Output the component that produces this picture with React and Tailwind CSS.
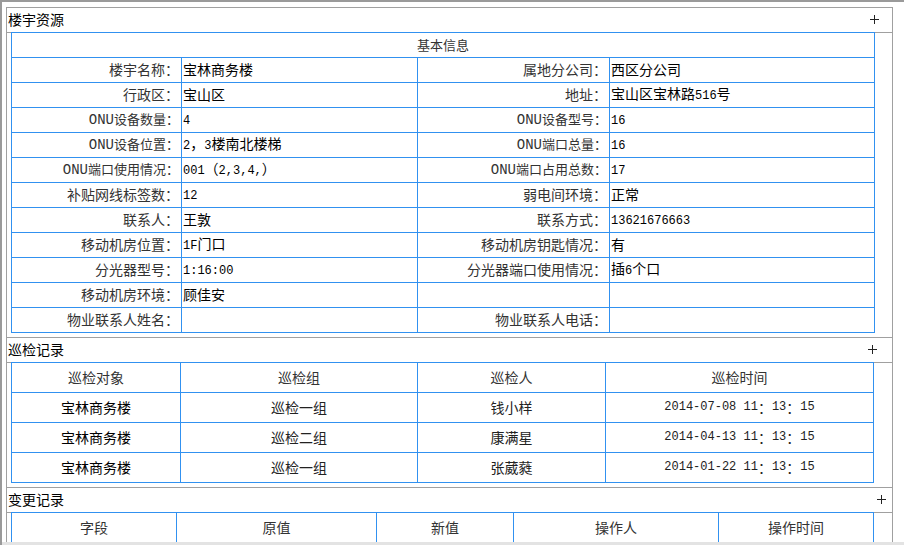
import React from "react";

const CJK = "font-['Noto_Sans_CJK_SC',sans-serif]";

function Mixed({ text, asciiCls = "text-[12px]" }) {
  const parts = text.match(/[\x20-\x7e]+|[^\x20-\x7e]+/g) || [];
  return parts.map((p, i) =>
    /[\x20-\x7e]/.test(p[0]) ? (
      <span key={i} className={"font-['Liberation_Mono',monospace] " + asciiCls}>
        {p}
      </span>
    ) : (
      <span key={i}>{p}</span>
    )
  );
}

function Plus() {
  return (
    <svg width="9" height="9" viewBox="0 0 9 9" className="block">
      <line x1="0" y1="4.5" x2="9" y2="4.5" stroke="#222" strokeWidth="1" />
      <line x1="4.5" y1="0" x2="4.5" y2="9" stroke="#222" strokeWidth="1" />
    </svg>
  );
}

function Header({ title, prCls }) {
  return (
    <div className={"h-[25px] border-b border-[#a0a0a0] flex items-center justify-between pb-[2px] " + prCls}>
      <span className={"text-[14px] leading-none text-black pl-px " + CJK}>{title}</span>
      <Plus />
    </div>
  );
}

const info = [
  ["楼宇名称：", "宝林商务楼", "属地分公司：", "西区分公司"],
  ["行政区：", "宝山区", "地址：", "宝山区宝林路516号"],
  ["ONU设备数量：", "4", "ONU设备型号：", "16"],
  ["ONU设备位置：", "2，3楼南北楼梯", "ONU端口总量：", "16"],
  ["ONU端口使用情况：", "001（2,3,4,）", "ONU端口占用总数：", "17"],
  ["补贴网线标签数：", "12", "弱电间环境：", "正常"],
  ["联系人：", "王敦", "联系方式：", "13621676663"],
  ["移动机房位置：", "1F门口", "移动机房钥匙情况：", "有"],
  ["分光器型号：", "1:16:00", "分光器端口使用情况：", "插6个口"],
  ["移动机房环境：", "顾佳安", "", ""],
  ["物业联系人姓名：", "", "物业联系人电话：", ""],
];

function Label({ text, w }) {
  const small = text.startsWith("ONU");
  return (
    <div
      className={
        "h-full border-r border-[#3191f0] flex items-center justify-end pr-[2px] pb-[2px] leading-none text-[#333] " +
        (small ? "text-[13px] " : "text-[14px] ") +
        w
      }
    >
      <span className="whitespace-nowrap">
        <Mixed text={text} asciiCls={small ? "text-[14px]" : "text-[12px]"} />
      </span>
    </div>
  );
}

function Value({ text, w }) {
  return (
    <div
      className={
        "h-full border-r border-[#3191f0] flex items-center pl-[1px] pb-[2px] leading-none text-[14px] text-black " + w
      }
    >
      <span className="whitespace-nowrap">
        <Mixed text={text} />
      </span>
    </div>
  );
}

const inspect = [
  ["宝林商务楼", "巡检一组", "钱小样", "2014-07-08 11：13：15"],
  ["宝林商务楼", "巡检二组", "康满星", "2014-04-13 11：13：15"],
  ["宝林商务楼", "巡检一组", "张葳蕤", "2014-01-22 11：13：15"],
];
const inspW = ["w-[169px]", "w-[237px]", "w-[188px]", "w-[268px]"];
const changeW = ["w-[165px]", "w-[200px]", "w-[137px]", "w-[205px]", "w-[155px]"];

function Cell({ children, w, cls = "" }) {
  return (
    <div
      className={
        "h-full border-r border-[#3191f0] flex items-center justify-center pb-[2px] leading-none text-[14px] whitespace-nowrap " +
        w +
        " " +
        cls
      }
    >
      {children}
    </div>
  );
}

export default function App() {
  return (
    <div className={"w-[904px] h-[545px] bg-white border-t-2 border-l-2 border-[#9a9a9a] flex flex-col overflow-hidden " + CJK}>
      <div className="flex-1 min-h-0 overflow-hidden pl-1 pt-[5px]">
        <div className="w-[887px] border-l border-r border-t border-[#a0a0a0]">
          {/* Section 1 */}
          <div className="border-b border-[#a0a0a0] pb-1">
            <Header title="楼宇资源" prCls="pr-[13px]" />
            <div className="ml-1 -mt-px w-[864px] border-t border-l border-[#3191f0]">
              <div className="h-[25px] border-b border-r border-[#3191f0] flex items-center justify-center pb-[2px] text-[13px] leading-none text-[#333]">
                基本信息
              </div>
              {info.map((r, i) => (
                <div key={i} className="flex h-[25px] border-b border-[#3191f0]">
                  <Label text={r[0]} w="w-[170px]" />
                  <Value text={r[1]} w="w-[236px]" />
                  <Label text={r[2]} w="w-[192px]" />
                  <Value text={r[3]} w="w-[265px]" />
                </div>
              ))}
            </div>
          </div>

          {/* Section 2 */}
          <div className="border-b border-[#a0a0a0] pb-1">
            <Header title="巡检记录" prCls="pr-[15px]" />
            <div className="ml-1 -mt-px w-[863px] border-t border-l border-[#3191f0]">
              <div className="flex h-[30px] border-b border-[#3191f0] text-[#333]">
                {["巡检对象", "巡检组", "巡检人", "巡检时间"].map((t, i) => (
                  <Cell key={i} w={inspW[i]}>
                    {t}
                  </Cell>
                ))}
              </div>
              {inspect.map((r, i) => (
                <div key={i} className="flex h-[30px] border-b border-[#3191f0]">
                  <Cell w={inspW[0]} cls="text-black">{r[0]}</Cell>
                  <Cell w={inspW[1]} cls="text-[#222]">{r[1]}</Cell>
                  <Cell w={inspW[2]} cls="text-[#222]">{r[2]}</Cell>
                  <Cell w={inspW[3]} cls="text-[#222] text-[12px]">
                    <Mixed text={r[3]} />
                  </Cell>
                </div>
              ))}
            </div>
          </div>

          {/* Section 3 */}
          <div>
            <Header title="变更记录" prCls="pr-[6px]" />
            <div className="ml-1 -mt-px w-[863px] border-t border-l border-[#3191f0]">
              <div className="flex h-[30px] border-b border-[#3191f0] text-[#333]">
                {["字段", "原值", "新值", "操作人", "操作时间"].map((t, i) => (
                  <Cell key={i} w={changeW[i]}>
                    {t}
                  </Cell>
                ))}
              </div>
            </div>
          </div>
        </div>
      </div>
      <div className="h-[3px] bg-[#e3e3e3] shrink-0" />
    </div>
  );
}
